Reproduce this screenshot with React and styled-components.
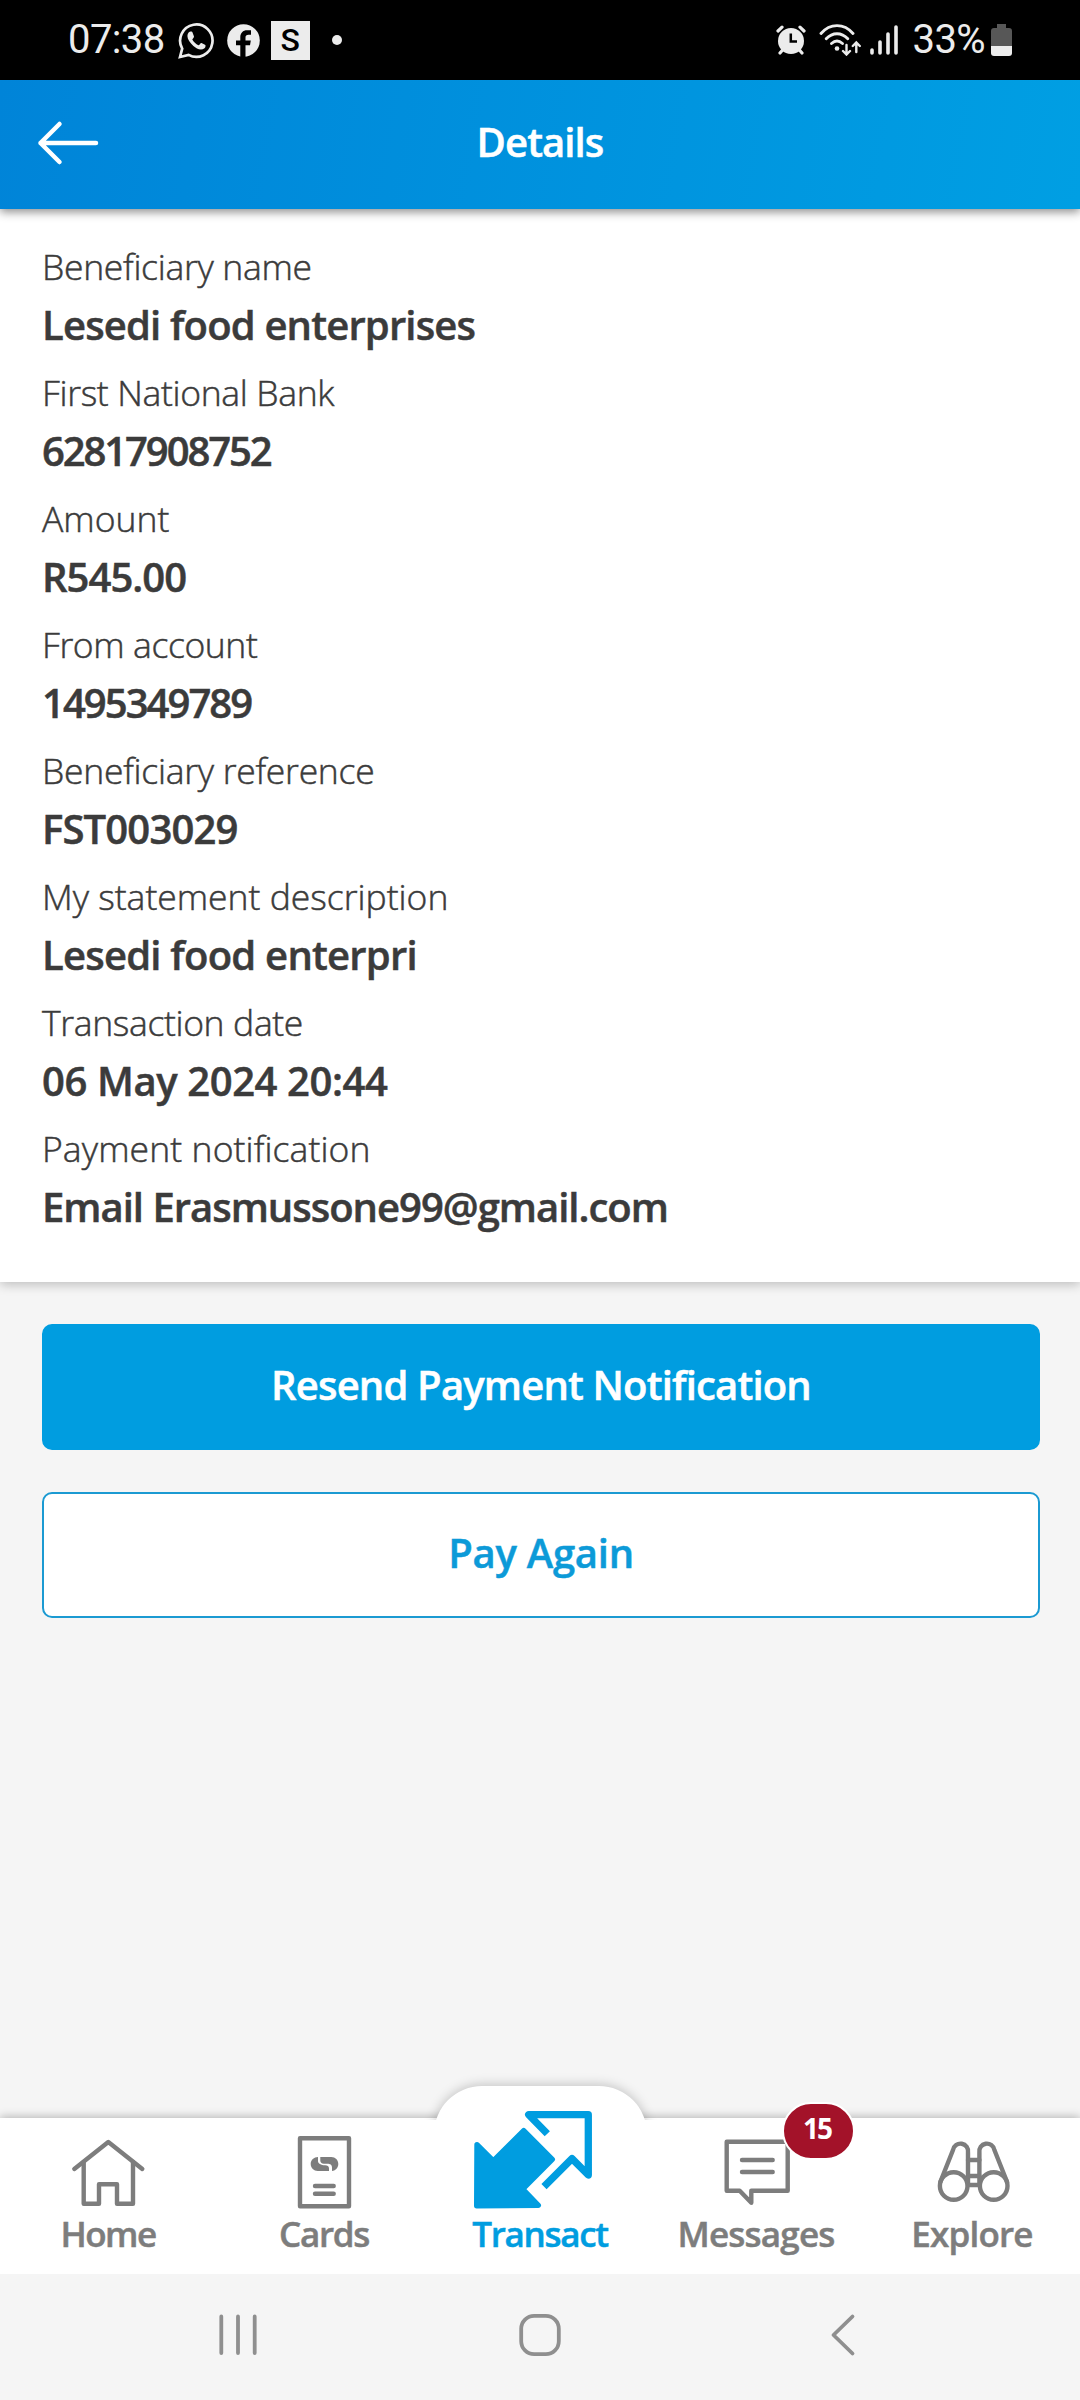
import { createGlobalStyle, styled } from "styled-components";

const GlobalStyle = createGlobalStyle`
  * {
    box-sizing: border-box;
  }
  body {
    margin: 0;
    background-color: #f5f5f5;
    font-family: "Open Sans", "Noto Sans", sans-serif;
    color: #3b3b3b;
  }
`;

const Screen = styled.div`
  width: 1080px;
  height: 2400px;
  display: flex;
  flex-direction: column;
  overflow: hidden;
  background-color: #f5f5f5;
`;

const Line = styled.span`
  display: block;
  white-space: nowrap;
  letter-spacing: ${({ $spacing }) => $spacing || 0}px;
  -webkit-text-stroke: 0.5px currentColor;
`;

/* status bar */

const StatusBar = styled.div`
  height: 80px;
  flex: none;
  display: flex;
  align-items: center;
  justify-content: space-between;
  padding: 0 68px;
  background-color: #000;
  color: #ececec;
`;

const StatusGroup = styled.div`
  display: flex;
  align-items: center;
  height: 78px;
`;

const StatusText = styled.span`
  font-family: Roboto, sans-serif;
  font-size: 40px;
  line-height: 78px;
  letter-spacing: -0.6px;
`;

const AppBadge = styled.span`
  width: 39px;
  height: 39px;
  margin-left: 11px;
  background-color: #ececec;
  color: #000;
  font-family: Roboto, sans-serif;
  font-size: 32px;
  font-weight: 500;
  line-height: 39px;
  text-align: center;
`;

const Dot = styled.span`
  width: 10px;
  height: 10px;
  margin-left: 22px;
  border-radius: 50%;
  background-color: #ececec;
`;

/* header */

const Header = styled.header`
  height: 129px;
  flex: none;
  display: grid;
  grid-template-columns: 140px 1fr 140px;
  align-items: center;
  background: linear-gradient(100deg, #0084d8, #009fe3);
  box-shadow: 0 3px 9px rgba(0, 0, 0, 0.45);
  z-index: 2;
`;

const BackButton = styled.button`
  width: 140px;
  height: 129px;
  padding: 0 0 3px 36px;
  border: 0;
  background: none;
  display: flex;
  align-items: center;
`;

const Title = styled.h1`
  margin: 0;
  height: 129px;
  font-size: 40px;
  font-weight: 600;
  line-height: 123px;
  color: #fff;
  display: flex;
  justify-content: center;
`;

/* details */

const Card = styled.section`
  height: 1073px;
  flex: none;
  padding: 31px 42px 0;
  background-color: #fff;
  box-shadow: 0 3px 10px rgba(0, 0, 0, 0.22);
`;

const Field = styled.div`
  height: 126px;
`;

const Label = styled.div`
  font-size: 35.5px;
  font-weight: 300;
  line-height: 52px;
  height: 55px;
`;

const Value = styled.div`
  font-size: 40px;
  font-weight: 600;
  line-height: 60px;
`;

const Actions = styled.div`
  flex: 1;
  display: flex;
  flex-direction: column;
  gap: 42px;
  padding: 42px 40px 0 42px;
`;

const Button = styled.button`
  height: 126px;
  display: flex;
  justify-content: center;
  padding: 0;
  border: 2px solid ${({ $primary }) => ($primary ? "#009de0" : "#1b9ad2")};
  border-radius: 10px;
  background-color: ${({ $primary }) => ($primary ? "#009de0" : "#fff")};
  color: ${({ $primary }) => ($primary ? "#fff" : "#0c9ad8")};
  font-family: inherit;
  font-size: 40px;
  font-weight: 600;
  line-height: 117px;
`;

/* tab bar */

const TabBar = styled.nav`
  height: 156px;
  flex: none;
  display: grid;
  grid-template-columns: repeat(5, 1fr);
  background-color: #fff;
  box-shadow: 0 -1px 9px rgba(0, 0, 0, 0.28);
`;

const Tab = styled.div`
  position: relative;
  height: 156px;
  display: flex;
  flex-direction: column;
  justify-content: flex-end;
  align-items: center;
  color: ${({ $active }) => ($active ? "#009de0" : "#7d7d7d")};
`;

const TabLabel = styled.div`
  height: 64px;
  flex: none;
  font-size: 35px;
  font-weight: 600;
  line-height: 48px;
  z-index: 1;
`;

const TabIcon = styled.svg`
  flex: none;
  fill: none;
  stroke: currentColor;
  stroke-width: 4.4;
  stroke-linecap: round;
  stroke-linejoin: round;
  z-index: 1;
`;

const SolidArrow = styled.path`
  fill: currentColor;
  stroke-width: 5.4;
`;

const OutlineArrow = styled.path`
  stroke-width: 7.3;
  stroke-linecap: butt;
`;

const Bump = styled.div`
  position: absolute;
  top: -32px;
  left: 2px;
  width: 213px;
  height: 100px;
  border-radius: 48px;
  background-color: #fff;
  box-shadow: 0 -1px 12px rgba(0, 0, 0, 0.22);
  clip-path: inset(-20px -20px 66px -20px);
`;

const Badge = styled.div`
  position: absolute;
  top: -16px;
  left: 134px;
  width: 73px;
  height: 58px;
  border: 2px solid #fff;
  border-radius: 29px;
  background-color: #a31229;
  color: #fff;
  font-size: 28px;
  font-weight: 700;
  line-height: 48px;
  letter-spacing: -2px;
  padding-right: 3px;
  display: flex;
  justify-content: center;
  z-index: 2;
`;

/* system navigation */

const SystemNav = styled.div`
  height: 126px;
  flex: none;
  display: grid;
  grid-template-columns: repeat(3, 302.5px);
  justify-content: center;
  justify-items: center;
  padding-top: 39px;
  background-color: #f5f5f5;
`;

const NavIcon = styled.svg`
  fill: none;
  stroke: #8f8f8f;
  stroke-width: 3.8;
  stroke-linecap: round;
  stroke-linejoin: round;
`;

const StatusIcon = styled.svg`
  flex: none;
  margin-left: ${({ $left }) => $left || 0}px;
  margin-right: ${({ $right }) => $right || 0}px;
`;

const fields = [
  {
    label: "Beneficiary name",
    labelSpacing: -0.3,
    value: "Lesedi food enterprises",
    valueSpacing: -0.83,
  },
  {
    label: "First National Bank",
    labelSpacing: -0.34,
    value: "62817908752",
    valueSpacing: -2.1,
  },
  {
    label: "Amount",
    labelSpacing: 0,
    value: "R545.00",
    valueSpacing: -0.95,
  },
  {
    label: "From account",
    labelSpacing: -0.4,
    value: "1495349789",
    valueSpacing: -1.95,
  },
  {
    label: "Beneficiary reference",
    labelSpacing: -0.27,
    value: "FST003029",
    valueSpacing: -0.85,
  },
  {
    label: "My statement description",
    labelSpacing: 0,
    value: "Lesedi food enterpri",
    valueSpacing: -0.77,
  },
  {
    label: "Transaction date",
    labelSpacing: -0.35,
    value: "06 May 2024 20:44",
    valueSpacing: -0.4,
  },
  {
    label: "Payment notification",
    labelSpacing: 0.1,
    value: "Email Erasmussone99@gmail.com",
    valueSpacing: -1,
  },
];

const HomeIcon = () => (
  <TabIcon width="100" height="80">
    <path d="M16.3 39 50.3 12 84.3 39" />
    <path d="M25.7 32V73.7H41V54.3H59V73.7H75V32" />
  </TabIcon>
);

const CardsIcon = () => (
  <TabIcon width="100" height="80">
    <path d="M26 8.3H75V76.3H26Z" />
    <path d="M41 56H59.7M41 63.7H59.7" />
    <g fill="currentColor" stroke="none">
      <path d="M44 27C40 27 36.7 30 36.7 34C36.7 38 40 41 43.7 41H55V38.5C55 36.5 53.5 35.3 51 35.3C47 35.3 44 33.5 44 31Z" />
      <path d="M46.3 27H57.3C61.3 27 64.3 30 64.3 34C64.3 38 61 41 58 41V37.5C58 34.5 56 33.7 53.5 33.7H50C47.5 33.7 46.3 32.5 46.3 30.5Z" />
    </g>
  </TabIcon>
);

const TransactIcon = () => (
  <TabIcon width="140" height="106">
    <SolidArrow d="M7 40.7 23.3 57 53.7 26.7 82.3 55.3 52.7 85 68.3 101.3 6.7 101.7Z" />
    <OutlineArrow d="M77.3 29.7 58.7 10.7H118.3V71L102 54.7 74 82.7" />
  </TabIcon>
);

const MessagesIcon = () => (
  <TabIcon width="100" height="80">
    <path d="M20.7 11.7H81.7V60.7H45.3V72.7L33.7 60.7H20.7Z" />
    <path d="M36 30H66.7M36 42H66.7" />
  </TabIcon>
);

const ExploreIcon = () => (
  <TabIcon width="100" height="80">
    <circle cx="31.7" cy="56" r="13.8" />
    <circle cx="71.7" cy="56" r="13.8" />
    <path d="M18.3 52 31 20A7.6 7.6 0 0 1 46 22.5V55" />
    <path d="M85.1 52 72.4 20A7.6 7.6 0 0 0 57.4 22.5V55" />
    <path d="M46 30H57.4M46 46H57.4M46 55H57.4" />
  </TabIcon>
);

const tabs = [
  { name: "Home", Icon: HomeIcon, spacing: -1.5 },
  { name: "Cards", Icon: CardsIcon, spacing: -1.3 },
  { name: "Transact", Icon: TransactIcon, active: true, spacing: -1.3 },
  { name: "Messages", Icon: MessagesIcon, badge: "15", spacing: -0.8 },
  { name: "Explore", Icon: ExploreIcon, spacing: -0.8 },
];

const Status = () => (
  <StatusBar>
    <StatusGroup>
      <StatusText>07:38</StatusText>
      <StatusIcon $left={13} width="37" height="37" viewBox="0 0 37 37">
        <path
          d="M2 35 4.2 26.6A16.2 16.2 0 1 1 10.6 32.9Z"
          fill="none"
          stroke="#ececec"
          strokeWidth="2.7"
        />
        <path
          d="M9.4 14C9.4 11 11.6 9.6 12.6 9.6C14 9.6 14.3 10 14.8 11.2L16 14.4C16.3 15.4 14.3 17 14.3 17.6C15.5 20 18 22.3 20.4 23.2C21.3 23.4 22.5 20.6 23.5 21L27 22.7C28 23.2 27.6 25.2 26.5 26.3C23 29 18.5 26.8 15.4 24C12 20.9 9.4 17.2 9.4 14Z"
          fill="#ececec"
        />
      </StatusIcon>
      <StatusIcon $left={12} width="33" height="33" viewBox="0 0 33 33">
        <circle cx="16.5" cy="16.5" r="16.3" fill="#ececec" />
        <path
          d="M13.3 33V21.2H9V16.4H13.3V13.5C13.3 9 16 6.3 20 6.3H24V10.8H21.5C19.4 10.8 18.5 11.8 18.5 13.5V16.4H23.8L23 21.2H18.5V33Z"
          fill="#000"
        />
      </StatusIcon>
      <AppBadge>S</AppBadge>
      <Dot />
    </StatusGroup>
    <StatusGroup>
      <StatusIcon width="30" height="30" viewBox="0 0 30 30">
        <circle cx="15" cy="16" r="13" fill="#ececec" />
        <path
          d="M2 6 6 2.2M28 6 24 2.2M4 28 7 24.5M26 28 23 24.5"
          stroke="#ececec"
          strokeWidth="3.2"
          strokeLinecap="round"
        />
        <path d="M14.8 8.5V16.5H21" fill="none" stroke="#000" strokeWidth="2.5" />
      </StatusIcon>
      <StatusIcon $left={13} width="43" height="32" viewBox="0 0 43 32">
        <g fill="none" stroke="#ececec" strokeWidth="2.9" strokeLinecap="round">
          <path d="M2 9.5C11 -1 25 -1 34 9.5" />
          <path d="M7.2 14.8C13.5 8 22.5 8 28.8 14.8" />
          <path d="M12.5 19.5C16 16.4 20 16.4 23.5 19.5" />
          <path
            d="M27.5 21V30M24 27 27.5 30.5 31 27M37.3 28V19M33.8 22 37.3 18.5 40.8 22"
            strokeWidth="2.4"
          />
        </g>
        <circle cx="18" cy="24.5" r="2.3" fill="#ececec" />
      </StatusIcon>
      <StatusIcon $left={8} $right={15} width="28" height="30" viewBox="0 0 28 30">
        <path
          d="M2 25V28M10 17V28M18 9V28M26 2V28"
          stroke="#ececec"
          strokeWidth="3.6"
          strokeLinecap="round"
        />
      </StatusIcon>
      <StatusText>33%</StatusText>
      <StatusIcon $left={6} width="21" height="32" viewBox="0 0 21 32">
        <path
          d="M6 0H15V4H18A3 3 0 0 1 21 7V22H0V7A3 3 0 0 1 3 4H6Z"
          fill="#575757"
        />
        <path d="M0 22H21V29A3 3 0 0 1 18 32H3A3 3 0 0 1 0 29Z" fill="#ececec" />
      </StatusIcon>
    </StatusGroup>
  </StatusBar>
);

const App = () => {
  return (
    <Screen>
      <GlobalStyle />
      <Status />
      <Header>
        <BackButton aria-label="Back">
          <svg width="64" height="46" viewBox="0 0 64 46">
            <path
              d="M23.5 4 4.5 23 23.5 42M4.5 23H60"
              fill="none"
              stroke="#fff"
              strokeWidth="4.5"
              strokeLinecap="round"
              strokeLinejoin="round"
            />
          </svg>
        </BackButton>
        <Title>
          <Line $spacing={-0.9}>Details</Line>
        </Title>
      </Header>
      <Card>
        {fields.map((v, i) => {
          return (
            <Field key={i}>
              <Label>
                <Line $spacing={v.labelSpacing}>{v.label}</Line>
              </Label>
              <Value>
                <Line $spacing={v.valueSpacing}>{v.value}</Line>
              </Value>
            </Field>
          );
        })}
      </Card>
      <Actions>
        <Button $primary>
          <Line $spacing={-0.82}>Resend Payment Notification</Line>
        </Button>
        <Button>
          <Line $spacing={-0.25}>Pay Again</Line>
        </Button>
      </Actions>
      <TabBar>
        {tabs.map(({ name, Icon, active, badge, spacing }) => (
          <Tab key={name} $active={active}>
            {active && <Bump />}
            <Icon />
            {badge && <Badge>{badge}</Badge>}
            <TabLabel>
              <Line $spacing={spacing}>{name}</Line>
            </TabLabel>
          </Tab>
        ))}
      </TabBar>
      <SystemNav>
        <NavIcon width="40" height="44">
          <path d="M3.3 3.5V40M20 3.5V40M36.7 3.5V40" />
        </NavIcon>
        <NavIcon width="44" height="44">
          <rect x="3.2" y="2.8" width="37.6" height="38.4" rx="13" />
        </NavIcon>
        <NavIcon width="26" height="44">
          <path d="M22.5 3.5 3.5 22 22.5 40.5" />
        </NavIcon>
      </SystemNav>
    </Screen>
  );
};

export default App;
